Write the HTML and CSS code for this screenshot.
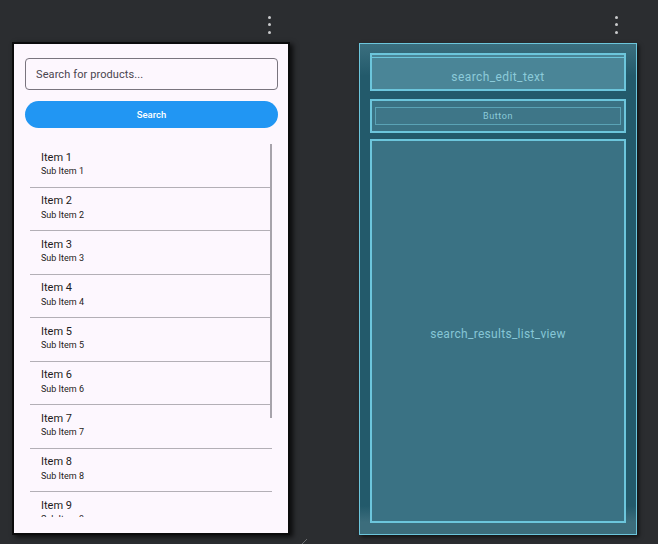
FILE: index.html
```html
<!DOCTYPE html>
<html>
<head>
<meta charset="utf-8">
<link rel="stylesheet" href="styles.css">
</head>
<body>
<div class="workspace">
  <div class="column col-left">
    <div class="toolbar"><div class="dots"><span></span><span></span><span></span></div></div>
    <div class="phone">
      <div class="search-input">Search for products...</div>
      <div class="search-btn">Search</div>
      <div class="list">
        <div class="item"><div class="title">Item 1</div><div class="sub">Sub Item 1</div></div>
        <div class="item"><div class="title">Item 2</div><div class="sub">Sub Item 2</div></div>
        <div class="item"><div class="title">Item 3</div><div class="sub">Sub Item 3</div></div>
        <div class="item"><div class="title">Item 4</div><div class="sub">Sub Item 4</div></div>
        <div class="item"><div class="title">Item 5</div><div class="sub">Sub Item 5</div></div>
        <div class="item"><div class="title">Item 6</div><div class="sub">Sub Item 6</div></div>
        <div class="item"><div class="title">Item 7</div><div class="sub">Sub Item 7</div></div>
        <div class="item"><div class="title">Item 8</div><div class="sub">Sub Item 8</div></div>
        <div class="item"><div class="title">Item 9</div><div class="sub">Sub Item 9</div></div>
        <div class="scrollbar"></div>
      </div>
    </div>
  </div>
  <div class="gutter">
    <svg class="handle" width="8" height="8" viewBox="0 0 8 8"><line x1="1" y1="7" x2="7" y2="1" stroke="#6b6d70" stroke-width="1"/></svg>
  </div>
  <div class="column col-right">
    <div class="toolbar tb-right"><div class="dots"><span></span><span></span><span></span></div></div>
    <div class="blueprint">
      <div class="bp-edit">search_edit_text</div>
      <div class="bp-btnbox"><div class="bp-btn">Button</div></div>
      <div class="bp-list">search_results_list_view</div>
    </div>
  </div>
</div>
</body>
</html>
```

FILE: styles.css
```css
html, body {
  margin: 0;
  padding: 0;
  background: #2b2d30;
  width: 658px;
  height: 544px;
  overflow: hidden;
  font-family: Roboto, "Noto Sans", sans-serif;
}

.workspace {
  display: flex;
  padding-left: 12px;
  height: 544px;
}

.column {
  display: flex;
  flex-direction: column;
}

.col-left { width: 279px; }
.col-right { width: 278px; }

.gutter {
  width: 68px;
  display: flex;
  flex-direction: column;
  justify-content: flex-end;
}

.handle {
  display: block;
  margin-left: 9px;
  margin-bottom: -2px;
}

.toolbar {
  height: 42px;
  display: flex;
  justify-content: flex-end;
  align-items: flex-start;
  padding-right: 20px;
  box-sizing: border-box;
}

.tb-right { height: 43px; padding-right: 19px; }

.dots {
  display: flex;
  flex-direction: column;
  gap: 4.5px;
  padding-top: 15.5px;
}

.dots span {
  width: 3px;
  height: 3px;
  border-radius: 50%;
  background: #c9cacc;
}

/* Left phone preview */
.phone {
  width: 274px;
  height: 489px;
  border: 2px solid #0b0b0c;
  background: #fdf7fe;
  box-shadow: 3px 2px 5px rgba(0, 0, 0, 0.75);
  display: flex;
  flex-direction: column;
  padding: 14px 10px 16px 11px;
  box-sizing: content-box;
  width: 253px;
  height: 459px;
}

.search-input {
  height: 32px;
  box-sizing: border-box;
  border: 1px solid #79747e;
  border-radius: 4px;
  font-size: 11px;
  color: #49454f;
  padding-left: 10px;
  display: flex;
  align-items: center;
  letter-spacing: 0.1px;
}

.search-btn {
  margin-top: 11px;
  height: 27px;
  border-radius: 14px;
  background: #2196f3;
  color: #ffffff;
  font-size: 9.5px;
  font-weight: 500;
  display: flex;
  align-items: center;
  justify-content: center;
}

.list {
  margin-top: 16px;
  margin-left: 5px;
  width: 242px;
  flex: 1;
  overflow: hidden;
  position: relative;
}

.item {
  height: 42.5px;
  border-bottom: 1px solid #b3afb6;
  padding-left: 11px;
  display: flex;
  flex-direction: column;
  justify-content: flex-start;
  color: #1d1b20;
}

.item .title {
  font-size: 11px;
  line-height: 13px;
  margin-top: 6.5px;
}

.item .sub {
  font-size: 9px;
  line-height: 11px;
  margin-top: 2.5px;
}

.scrollbar {
  position: absolute;
  top: 0;
  right: 0;
  width: 2.5px;
  height: 274px;
  background: #a7a3ab;
}

/* Right blueprint */
.blueprint {
  width: 278px;
  height: 492px;
  box-sizing: border-box;
  border: 1px solid #6cc6dc;
  background: linear-gradient(#3b6f7f 0, #235a6b 32px, #235a6b calc(100% - 28px), #3c6d7c calc(100% - 12px), #3c6d7c 100%);
  box-shadow: 2px 2px 4px rgba(0, 0, 0, 0.6);
  padding: 9px 10px 11px 10px;
  display: flex;
  flex-direction: column;
  color: #86c6d6;
}

.bp-edit {
  height: 38px;
  box-sizing: border-box;
  border: 2px solid #6cc6dc;
  background: #4a8597;
  box-shadow: inset 0 2px 0 #4a8597, inset 0 3px 0 #6cc6dc;
  display: flex;
  align-items: center;
  justify-content: center;
  padding-top: 10px;
  font-size: 12px;
  letter-spacing: 0.4px;
  color: #8ccbda;
}

.bp-btnbox {
  margin-top: 8px;
  height: 34px;
  box-sizing: border-box;
  border: 2px solid #6cc6dc;
  background: #3a7284;
  padding: 6px 3px;
  display: flex;
}

.bp-btn {
  flex: 1;
  border: 1px solid #5aa3b6;
  background: #3e7688;
  display: flex;
  align-items: center;
  justify-content: center;
  font-size: 9px;
  letter-spacing: 0.6px;
  color: #8ccbda;
}

.bp-list {
  margin-top: 6px;
  flex: 1;
  box-sizing: border-box;
  border: 2px solid #6cc6dc;
  background: #3a7284;
  display: flex;
  align-items: center;
  justify-content: center;
  padding-top: 6px;
  font-size: 12px;
  letter-spacing: 0.3px;
  color: #86c6d6;
}
```
